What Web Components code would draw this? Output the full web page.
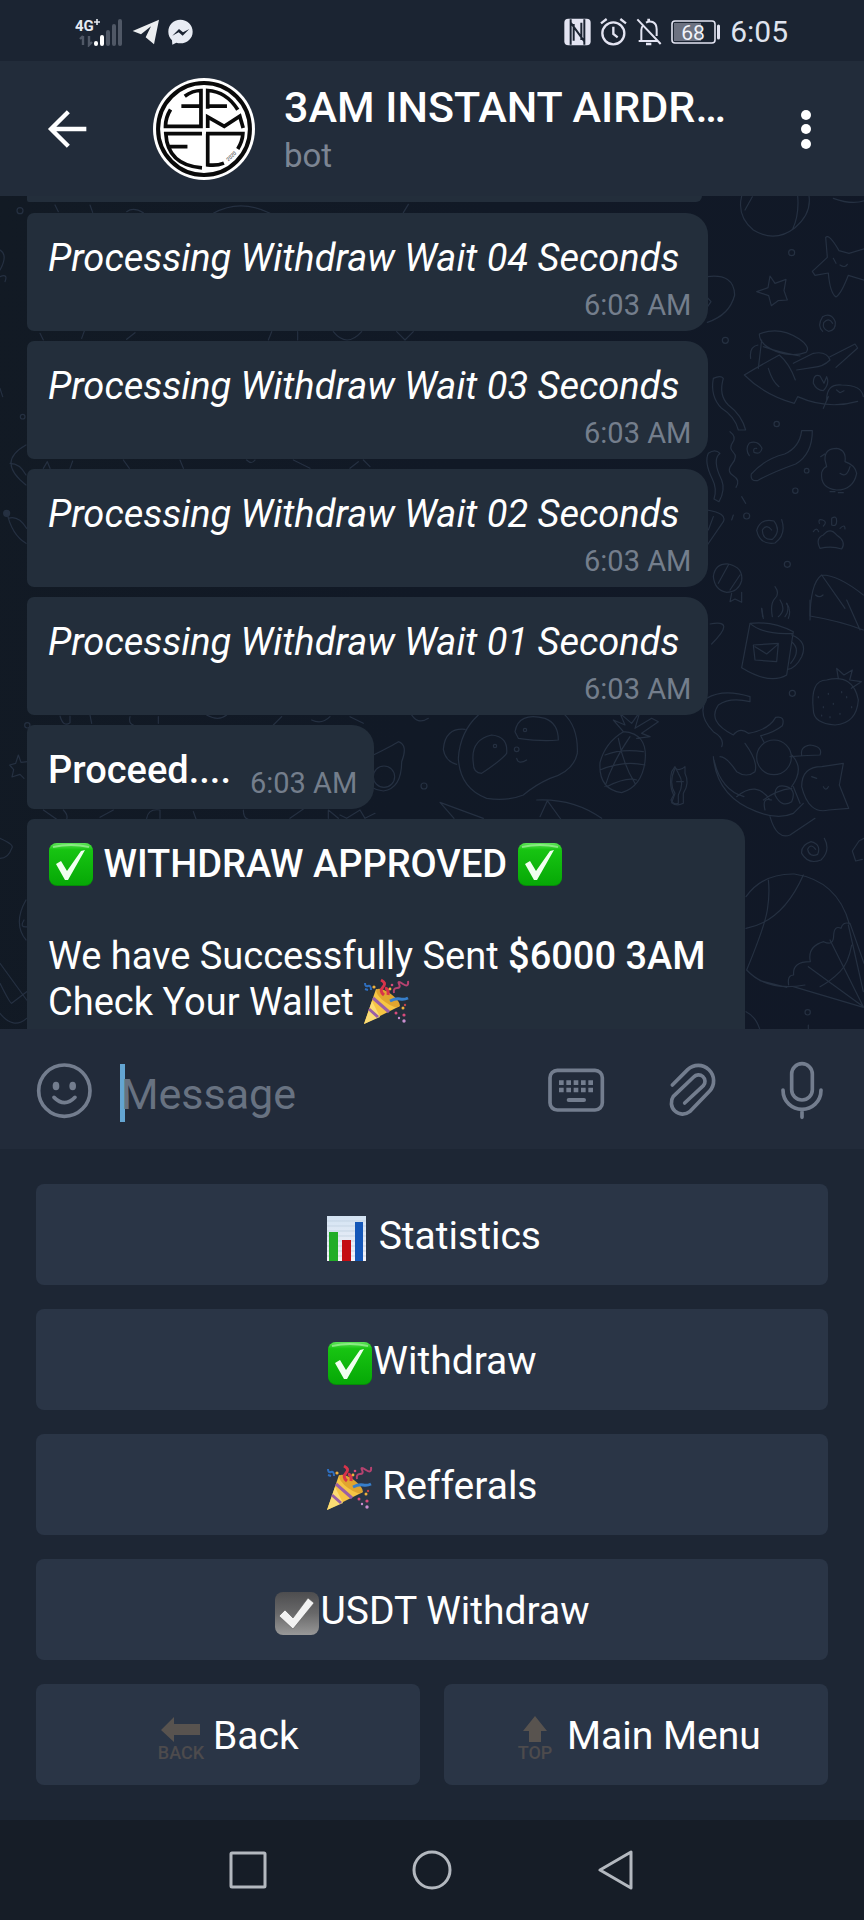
<!DOCTYPE html>
<html lang="en">
<head>
<meta charset="utf-8">
<meta name="viewport" content="width=device-width, initial-scale=1">
<title>3AM Instant Airdrop</title>
<style>
  html, body { margin: 0; background: #161d27; }
  body { font-family: Roboto, "Noto Sans", sans-serif; color: #fff; }
</style>
</head>
<body>
<chat-screen></chat-screen>

<script>
const define = (name, html) => {
  const tpl = document.createElement('template');
  tpl.innerHTML = html;
  customElements.define(name, class extends HTMLElement {
    constructor() {
      super();
      this.attachShadow({ mode: 'open' }).append(tpl.content.cloneNode(true));
    }
  });
};

/* ---------- emoji ---------- */
const EMOJI = {
  check: `<defs><linearGradient id="g" x1="0" y1="0" x2="0" y2="1"><stop offset="0" stop-color="#5fe35a"/><stop offset=".16" stop-color="#17c412"/><stop offset="1" stop-color="#06a806"/></linearGradient></defs>
    <rect x="1" y="1" width="44" height="43" rx="8" fill="#078a0a"/><rect x="1" y="1" width="44" height="42" rx="8" fill="url(#g)"/>
    <path d="M5 5Q23 1 41 5" stroke="#a6f2a0" stroke-width="2" fill="none" opacity=".7"/>
    <path d="M8 22l5-3 6 10L33 9l4-1-17 30h-3z" fill="#f1fff0"/>`,
  gray: `<defs><linearGradient id="g" x1="0" y1="0" x2="0" y2="1"><stop offset="0" stop-color="#4d4d4f"/><stop offset=".5" stop-color="#69696a"/><stop offset="1" stop-color="#989898"/></linearGradient></defs>
    <rect x="1" y="1" width="44" height="43" rx="8" fill="url(#g)"/>
    <path d="M5 25l6-6 8 8L34 7l6 5-21 26z" fill="#f2f2f2" stroke="#555" stroke-width=".6"/>`,
  chart: `<defs><linearGradient id="g" x1="0" y1="0" x2="0" y2="1"><stop offset="0" stop-color="#d3e3f3"/><stop offset="1" stop-color="#f6f3f8"/></linearGradient></defs>
    <rect x="4" y="0" width="39" height="45" fill="url(#g)"/>
    <path d="M4 5h39M4 10h39M4 15h39M4 20h39M4 25h39M4 30h39M4 35h39M4 40h39" stroke="#bccddd" stroke-width=".7"/>
    <rect x="6" y="16" width="9" height="29" fill="#22ad27"/><rect x="19" y="24" width="9" height="21" fill="#c40d13"/><rect x="32" y="6" width="8" height="39" fill="#1457b8"/>`,
  party: `<path d="M1 44L13 9Q29 14 37 26z" fill="#f6c544"/>
    <path d="M1 44L9 21l8 16z" fill="#fbdc74"/>
    <path d="M10 18l16 14M6 29l9 8" stroke="#9a5fa5" stroke-width="3" fill="none"/>
    <ellipse cx="25" cy="18" rx="14" ry="5" transform="rotate(36 25 18)" fill="#e0a52f"/>
    <path d="M21 15q-5-4-1-8t-2-7M25 15q1-6-3-7" stroke="#d8334a" stroke-width="3" fill="none"/>
    <path d="M27 21q6-3 10-2t8-1" stroke="#377fcb" stroke-width="3" fill="none"/>
    <path d="M2 3q0 4 3 3t3 4M2 9l3 1" stroke="#2e6fc0" stroke-width="2" fill="none"/>
    <path d="M31 13q-1-5 3-5t2-4 4 0 5-3" stroke="#b5426f" stroke-width="2" fill="none"/>
    <g fill="#d94a7b"><circle cx="33" cy="33" r="1.5"/><circle cx="41" cy="35" r="1.6"/><circle cx="29" cy="5" r="1.3"/></g>
    <g fill="#efb13c"><circle cx="11" cy="7" r="1.6"/><circle cx="40" cy="28" r="1.5"/><circle cx="27" cy="9" r="1.4"/></g>
    <g fill="#c98fd0"><circle cx="41" cy="41" r="1.7"/><circle cx="36" cy="38" r="1.2"/></g><circle cx="42" cy="25" r="1.2" fill="#c3424c"/>`,
  back: `<path d="M4 14L17 1v7h26v11H17v7z" fill="#58534f"/><text x="24" y="43" text-anchor="middle" font-size="18" font-weight="500" fill="#4d4b4d">BACK</text>`,
  top: `<path d="M24 0l12 15h-6v11H18V15h-6z" fill="#58534f"/><text x="24" y="43" text-anchor="middle" font-size="18" font-weight="500" fill="#4d4b4d">TOP</text>`
};
customElements.define('ui-emoji', class extends HTMLElement {
  constructor() {
    super();
    this.attachShadow({ mode: 'open' }).innerHTML = `<style>
      :host { display: inline-block; width: 46px; height: 45px; vertical-align: var(--emoji-drop, -10px); }
      svg { display: block; overflow: visible; }
    </style><svg width="46" height="45" viewBox="0 0 46 45" aria-hidden="true">${EMOJI[this.getAttribute('name')]}</svg>`;
  }
});

/* ---------- status bar ---------- */
define('status-bar', `<style>
  :host { display: flex; align-items: center; justify-content: space-between; height: 61px; padding: 3px 76px 0 75px; box-sizing: border-box; background: #1b2432; color: #dfe3ee; }
  div { display: flex; align-items: center; }
  .left { gap: 9px; } .right { gap: 9px; }
  svg { display: block; }
  .clock { font-size: 30px; line-height: 36px; }
</style>
<div class="left">
  <svg width="48" height="30" viewBox="0 0 48 30"><text x="0" y="14" font-size="15" font-weight="700" fill="#e6eaf2">4G</text><path d="M19 5h6M22 2v6" stroke="#e6eaf2" stroke-width="1.6"/>
    <g stroke-width="4" stroke-linecap="round"><path d="M21 26v1M27 20v7" stroke="#fff"/><path d="M33 15v12M39 9v18M45 4v23" stroke="#505866"/></g>
    <path d="M8 19v9M5 22l3-3M14 19v9l3-3" stroke="#505866" stroke-width="2.4" fill="none"/></svg>
  <svg width="27" height="26" viewBox="0 0 81 78"><path d="M2 36L81 2 66 76 41 55 57 22 27 46z" fill="#eceef0"/></svg>
  <svg width="25" height="26" viewBox="0 0 75 78"><path d="M37 2C16 2 1 17 1 38c0 10 4 19 11 26l1 13 12-6c4 1 8 2 12 2 21 0 37-15 37-35S58 2 37 2z" fill="#e8ecf4"/><path d="M13 50l20-20 12 10 19-10-20 20-12-10z" fill="#1b2432"/></svg>
</div>
<div class="right">
  <svg width="27" height="28" viewBox="0 0 81 84"><rect x="1" y="2" width="79" height="80" rx="12" fill="#e3e4f2"/><path d="M20 4v76M61 4v76M20 14l41 56M29 18v50M52 14v52" stroke="#1b2432" stroke-width="6" fill="none"/></svg>
  <svg width="27" height="28" viewBox="0 0 81 84" fill="none" stroke="#e3e4f2" stroke-width="7"><circle cx="40" cy="46" r="33"/><path d="M40 26v22l13 10M3 16L20 3M78 16L61 3"/></svg>
  <svg width="26" height="28" viewBox="0 0 78 84" fill="none" stroke="#e3e4f2" stroke-width="6"><path d="M4 4l70 74M16 68V36q0-8 5-13M30 14q10-6 20-2 12 5 12 22v20M8 69h56"/><path d="M38 2v8M30 78h16" stroke-width="8"/></svg>
  <svg width="50" height="26" viewBox="0 0 50 26"><rect x="1" y="2" width="43" height="22" rx="3" fill="none" stroke="#e3e4f2" stroke-width="1.6"/><rect x="3" y="4" width="27" height="18" fill="#6c7180"/><path d="M47.5 7v12" stroke="#e3e4f2" stroke-width="3" stroke-linecap="round"/><text x="22" y="21" text-anchor="middle" font-size="21" fill="#f3f4fa">68</text></svg>
  <span class="clock">6:05</span>
</div>`);

/* ---------- chat header ---------- */
define('chat-header', `<style>
  :host { display: flex; align-items: center; height: 135px; padding: 0 33px 0 45px; box-sizing: border-box; background: #222c3a; }
  button { all: unset; display: block; cursor: pointer; }
  svg { display: block; }
  .avatar { margin: 0 29px 0 63px; flex: none; }
  .who { flex: 1; min-width: 0; padding-top: 4px; }
  h1 { margin: 0; font-size: 43px; line-height: 50px; font-weight: 500; white-space: nowrap; }
  p { margin: 0; font-size: 33px; line-height: 48px; color: #7c8593; }
</style>
<button aria-label="Go back"><svg width="45" height="40" viewBox="0 0 135 120" fill="none" stroke="#fff" stroke-width="13"><path d="M18 60h106M70 8L18 60l52 52"/></svg></button>
<svg class="avatar" width="102" height="102" viewBox="461 237 302 302" role="img" aria-label="3AM logo">
  <circle cx="612" cy="388" r="151" fill="#fff"/>
  <circle cx="612" cy="388" r="136" fill="none" stroke="#0a0a0a" stroke-width="12"/>
  <g fill="none" stroke="#0a0a0a" stroke-width="11">
    <path d="M555 291Q578 274 603 274V380H498Q498 354 513 330M545 320h58"/>
    <path d="M623 328V274Q678 277 712 331M623 320h57M623 385V352l49 28 46-30 10 35"/>
    <path d="M606 402H499Q504 495 606 503M506 440h57"/>
    <path d="M623 402V494Q648 498 671 489M618 402H727Q726 424 712 447"/>
  </g>
  <text x="684" y="484" font-size="15" transform="rotate(-43 684 484)" fill="#222">2020</text>
</svg>
<div class="who"><h1>3AM INSTANT AIRDR…</h1><p>bot</p></div>
<button aria-label="More options"><svg width="50" height="60" viewBox="0 0 50 60" fill="#fff"><circle cx="25" cy="16" r="5"/><circle cx="25" cy="30" r="5"/><circle cx="25" cy="45" r="5"/></svg></button>`);

/* ---------- wallpaper ---------- */
define('doodle-wallpaper', `<style>
  :host { display: block; overflow: hidden; background: linear-gradient(100deg, #121a24 0%, #111926 50%, #111827 100%); }
  svg { display: block; }
</style>
<svg width="864" height="833" viewBox="0 196 864 833" fill="none" stroke="#253041" stroke-width="3.600" stroke-linecap="round" stroke-linejoin="round" aria-hidden="true">
  <g transform="translate(650 190) scale(.33333)">
    <path d="M275 18q-15 60 35 102 65 40 125-7 50-42 42-95M443 18q5 55-15 100M285 60l22-40M550 25q60 22 100 5"/>
    <path d="M527 142q10-12 40 40l30 8 50-15M527 142l5 60-45 42 8 12 40-7q5 60 23 72 15-8 37-65l50 15M550 205l8 15M570 225q15 10 22-2"/>
    <path d="M360 258l15 22 33-12-6 34 10 28-28 2-20 15-8-30-36-12 34-12z"/>
    <path d="M172 260q80-10 82 55-15 60-82 82M165 315l18 20-15 22"/>
    <path d="M548 400q-12-20-27-2-5 20 15 26 22-3 20-28-12-30-38-16-18 28 0 44"/>
    <path d="M328 432q60-25 120 15 35 25 20 40-40 15-90-3-50-20-50-52zM340 470q50 18 110 28M325 535l10-85M302 505q-5-35 22-40"/>
    <path d="M283 555q50-30 105-60 30 25 48 75M283 555q60 60 150 85l10-20q90 40 180 14M355 535q12 40 32 55"/>
    <path d="M430 520l60-30q40-8 50 20-20 20-50 22l-50 8M540 500l75-38 8 12-65 58"/>
    <path d="M490 580q0-30 20-22l12 22 8-20q10 20-10 42-20 0-30-22M530 630q0-50 45-45 60 0 65 35M520 655l15-35M560 600l10 8 12-6"/>
    <path d="M190 565q22-10 30 0-15 50 15 80 40 30 52 75h-22q-10-40-50-65-35-35-25-90"/>
    <path d="M455 722h32q0 70-50 100-70 25-115 50-22 2-18-20 40-45 100-60 45-20 51-70"/>
    <path d="M320 775q-12-2-8 12 20 8 24-12-12-25-38-16-14 18 0 38"/>
    <path d="M240 725q20 15 8 32t2 30-4 35 4 35 8 35"/>
    <path d="M175 790q20-15 35 0-25 20 5 80 12 30-8 65l-15-8q10-30-5-60-25-50-12-77"/>
    <path d="M525 810q-2-35 35-35 30 5 25 40 30 10 35 35-10 50-60 50-50-5-45-52 5-15 15-18zM570 850q20 15 30-20M540 905h15M565 908h15M512 800l12-8"/>
    <path d="M365 1020q-15-20-28 0 0 30 30 28 28-25 5-55-40-10-52 28 10 45 55 38 35-25 20-70"/>
    <path d="M510 1075q-15-30 10-40 20-25 40 0 30 20 15 42-30-10-65-2M490 1025q10-15 16 0M508 1000q-5-15 10-10t2 18M545 985q15-10 15 8t-15 12zM570 1015q15-15 15 2"/>
    <path d="M190 1160q5-40 45-38 45 10 40 50-10 35-45 35-35-5-40-47zM205 1180l30-55M240 1200l30-45M245 1210l-5 25 15-8 20 10v-30"/>
    <path d="M480 1290q0-110 35-135 50 0 125 60M515 1155l70 100M497 1215q10 10 22 0"/>
    <path d="M375 1190q15 20 0 35t-8 55M335 1255l5 30M410 1240q10 20-5 40M172 960q60 10 48 35l-48 70M175 1020l15-40M245 990l5-15M275 920l12 20"/>
    <g><circle cx="425" cy="188" r="9"/><circle cx="226" cy="451" r="9"/><circle cx="380" cy="702" r="8"/><circle cx="470" cy="842" r="7"/><circle cx="436" cy="902" r="8"/><circle cx="290" cy="978" r="9"/><circle cx="412" cy="1123" r="9"/></g>
  </g>
  <g transform="translate(650 600) scale(.33333)">
    <path d="M300 70q65-8 130 25l-20 130q-50 30-135-22zM300 70q40 35 128 30M425 105q50 20 30 65-18 35-42 38M425 125q30 25-3 65M310 135l75-5-5 55-65-5zM315 140l35 22 33-28M385 50q25-20 5-50M335 25l3 25M410 10q15 20 5 45"/>
    <path d="M480 0v48q90 15 160 42M590 0l40 90M180 72q80-15 5 60"/>
    <path d="M490 330q-10-90 40-90 80-20 95 60-5 70-70 75-65-5-65-45M565 235l-5-30 22 20 25-15-8 30 35 5-30 20M505 290v3M520 320v3M535 280v3M550 310v3M570 340v3M590 290v3M605 320v3M540 350v3M515 345v3M575 275v3"/>
    <path d="M215 440q10-25-25-45-50-50-20-100 50-30 130-5v15q-60-15-95 10-35 50 45 90 20-25 45-5 60-10 82-48 30-5 20 25-25 20-65 30l10 20"/>
    <path d="M190 470q10 120 130 165 65 25 110 5l30-30M210 470q20 0 50 45 30 20 55 0 10-30-30-85M192 480q20 90 90 110"/>
    <circle cx="372" cy="472" r="52"/>
    <path d="M420 470q60-5 90-5 10-25-30-30-30 5-25 30M455 560q0-60 60-60l65-10-12 65 28 70-60 5q-60 15-81-70zM425 465q40 40 0 95M485 530l15 5M520 560q8 15 15 0M340 600q40-30 85-35M260 590q60-50 100 10M375 585q0-35 35-25 30 10 15 45-30 20-50-20M345 630q-10-40 20-30M360 650q20 70 60 55l75-50M430 560l20 50"/>
    <path d="M75 505q15 10 30-5v20q15 30-5 60v30q-20 10-35-2l10-28q-20-30 0-75M80 545h20"/>
    <path d="M497 748q-15-20-24 0 5 25 30 15 12-30-20-38-30 10-28 35 20 35 58 20 30-30 10-65M642 715l-15 8-20 30 10 30 20-5"/>
    <path d="M288 890q50-70 145-68 130 20 165 150M355 840q5 40-3 90t-62 180q60 65 175 45M288 985q110-20 172-160M598 970q-20-5-25 15-20-10-22 20 0 35-30 20-50 15-40 60-55 0-50 40-20 0-15 30M540 1020l100 200M475 1100l165 120M430 1160l210 62M410 1162l-80-20M600 970l42 120M595 975l45 200M570 1115q25-25 35-80M510 1160q30-15 60-45M288 1235q30 15 42 55M475 1275v15"/>
    <circle cx="427" cy="280" r="9"/><circle cx="473" cy="1237" r="8"/>
  </g>
  <g transform="translate(340 700) scale(.33333)">
    <path d="M415 45q-55 50-60 130 5 90 85 120 60 10 110-10 35-30 80-50 70-20 82-75Q715 80 670 40M375 88q-60-5-65 60 5 35 40 45M400 190q-10-70 55-85 50 5 45 55-15 20-75 60-25 0-25-30M525 95q10-60 90-40 40 15 40 65-50 5-120-5zM530 175q5 20 30 5"/>
    <circle cx="465" cy="138" r="5"/><circle cx="555" cy="90" r="5"/><circle cx="530" cy="148" r="7"/><circle cx="252" cy="258" r="9"/>
    <path d="M100 165q60-30 75-40 30 10 10 60 0 80-55 88-20-2-32-10M215 45q20 30 50 10"/><circle cx="132" cy="230" r="32"/>
    <path d="M850 95q75 5 65 90-10 75-70 93-70-10-65-90 15-60 70-93M795 165q50-20 115-10M780 210q70-30 135-15M800 260q60-30 90-20M835 115q15 80 50 135M870 110q-55 80-75 150M850 95l-30-35 35 15-15-35 35 30 25-35-15 50 50-30 20 10-50 35 25 10-40 5"/>
    <path d="M995 215l10-15 10 20q20 30 0 65v25q-15 5-22-10l8-15q-15-30-6-70M430 355l-130-48 42 48M590 300q110-5 195 55M600 350l22-48 40 55M0 345l20 10 40-25 15 25 30-15"/>
  </g>
  <g transform="translate(0 700) scale(.33333)">
    <path d="M55 165l8 22 20-2M55 165l-8 25-18 5 12 14-5 22 24-8 12 12M0 415q45 20 35 30-10 30-35 30M78 600q-40 70 0 120M72 660q-15 25 12 20M0 790l80 110M0 850q30 60 35 60l45-35M0 940q40 50 80 15"/><circle cx="82" cy="76" r="8"/>
    <path d="M180 48q10 35 30 20v-20M270 45l5 25M390 50q-5 20 10 25M475 50v20M620 45q35 20 60 0M820 75l25-25M935 60q30 15 55-10M1050 50l40 20M130 330l40 28M190 330q15 15 10 28M340 330l-40 22M440 355q5-30 40-25v25M580 335l8 22M730 330q0 25 15 28M870 355l40-28M985 355v-25l30 25"/>
  </g>
  <g transform="translate(0 190) scale(.33333)">
    <path d="M0 180q25 15 0 60M0 260q25-10 15 15M0 595l8 25M78 765q-90 50 0 120M30 820q30 0 48 35M20 965q15 70 58 95M25 985q30-10 55 30"/><circle cx="60" cy="62" r="9"/><circle cx="68" cy="680" r="7"/><circle cx="20" cy="970" r="9" fill="#253041"/>
    <path d="M165 45l10 20M270 45l8 22M380 65q20-15 50 3M640 70q80-45 170 0M1210 68l15-25M120 430l10 20M245 445l8-22M380 448l25-20M805 450l10-25M893 425v25M1000 425q40 50 85 0M1190 425l25 25 25-25M130 835l12-20 8 20M210 835l8-22M370 810l18 25M540 810l10 25M740 810q15 15 25 0M880 810l50 25M1050 835l25-20M1090 810l20 20"/>
  </g>
</svg>`);

/* ---------- message bubble ---------- */
define('chat-bubble', `<style>
  :host { display: flex; flex-direction: column; align-self: flex-start; box-sizing: border-box; max-width: 92%; padding: 22px 17px 9px 21px; background: #232e3b; border-radius: 7px 22px 22px 7px; font-size: 38px; line-height: 46px; }
  :host([inline]) { flex-direction: row; align-items: flex-end; gap: 19px; }
  :host([stub]) { width: 675px; height: 6px; margin-bottom: 1px; padding: 0; border-radius: 0 0 22px 7px; }
  :host([open]) { flex: 1 0 0; padding-right: 39px; padding-bottom: 0; border-radius: 7px 22px 0 0; }
  .body { display: block; padding-right: 12px; }
  :host([inline]) .body { padding: 0 0 7px; }
  :host([open]) .body { padding-right: 0; }
  ::slotted([slot=time]) { align-self: flex-end; margin-top: 8px; font-size: 29px; line-height: 33px; color: #747e8c; white-space: nowrap; }
</style>
<div class="body"><slot></slot></div><slot name="time"></slot>`);

define('message-list', `<style>
  :host { display: grid; position: relative; overflow: hidden; min-height: 0; }
  doodle-wallpaper { position: absolute; inset: 0; }
  .list { position: relative; display: flex; flex-direction: column; gap: 10px; padding-left: 27px; }
  p { margin: 0; }
  b { font-weight: 500; }
</style>
<doodle-wallpaper></doodle-wallpaper>
<div class="list">
  <chat-bubble stub></chat-bubble>
  <chat-bubble><i>Processing Withdraw Wait 04 Seconds</i><time slot="time">6:03 AM</time></chat-bubble>
  <chat-bubble><i>Processing Withdraw Wait 03 Seconds</i><time slot="time">6:03 AM</time></chat-bubble>
  <chat-bubble><i>Processing Withdraw Wait 02 Seconds</i><time slot="time">6:03 AM</time></chat-bubble>
  <chat-bubble><i>Processing Withdraw Wait 01 Seconds</i><time slot="time">6:03 AM</time></chat-bubble>
  <chat-bubble inline><b>Proceed....</b><time slot="time">6:03 AM</time></chat-bubble>
  <chat-bubble open>
    <p><ui-emoji name="check"></ui-emoji><b> WITHDRAW APPROVED </b><ui-emoji name="check"></ui-emoji></p>
    <p><br></p>
    <p>We have Successfully Sent <b>$6000 3AM</b></p>
    <p>Check Your Wallet <ui-emoji name="party"></ui-emoji></p>
  </chat-bubble>
</div>`);

/* ---------- message input ---------- */
define('message-bar', `<style>
  :host { display: flex; align-items: center; height: 120px; padding: 2px 39px 0 35px; box-sizing: border-box; background: #222b3a; }
  button { all: unset; display: block; flex: none; cursor: pointer; }
  svg { display: block; fill: none; stroke: #737d8e; stroke-width: 11; stroke-linecap: round; stroke-linejoin: round; }
  .caret { flex: none; width: 5px; height: 58px; margin: 5px 0 0 26px; background: #64a5d2; }
  input { flex: 1; min-width: 0; height: 58px; margin: 7px 0 0 -4px; padding: 0; border: 0; outline: 0; background: none; color: #fff; font: 43px/50px Roboto, sans-serif; }
  input::placeholder { color: #687281; opacity: 1; }
  .tools { display: flex; align-items: center; gap: 62px; }
</style>
<button aria-label="Emoji"><svg width="59" height="59" viewBox="105 1083 177 177"><circle cx="193" cy="1172" r="77"/><path d="M162 1192q32 32 63 0"/><g fill="#737d8e" stroke="none"><ellipse cx="168" cy="1158" rx="10" ry="13"/><ellipse cx="218" cy="1158" rx="10" ry="13"/></g></svg></button>
<span class="caret"></span>
<input type="text" placeholder="Message" aria-label="Message">
<div class="tools">
  <button aria-label="Bot keyboard"><svg width="58" height="58" viewBox="345 726 174 174"><rect x="354" y="754" width="157" height="119" rx="22"/><path d="M381 791h102M381 813h102" stroke-dasharray="14 8" stroke-linecap="butt" stroke-width="14"/><path d="M410 843h46" stroke-width="12"/></svg></button>
  <button aria-label="Attach file"><svg width="50" height="58" viewBox="702 726 150 174"><path d="M718 798l46-46A46 46 0 0 1 830 816L770 878A34 34 0 0 1 721 832L782 774A19 19 0 0 1 811 800L755 852"/></svg></button>
  <button aria-label="Voice message"><svg width="46" height="60" viewBox="1040 722 138 180"><rect x="1078" y="733" width="62" height="109" rx="31"/><path d="M1052 812C1052 848 1080 870 1109 870S1166 848 1166 812M1109 870v24"/></svg></button>
</div>`);

/* ---------- bot keyboard ---------- */
define('key-button', `<style>
  :host { display: block; --emoji-drop: -12px; }
  button { display: block; box-sizing: border-box; width: 100%; height: 101px; margin: 0; padding: 4px 0 0; border: 0; border-radius: 8px; background: #2a3546; color: #fff; font: 39px/46px Roboto, sans-serif; text-align: center; cursor: pointer; }
</style>
<button type="button"><slot></slot></button>`);

define('bot-keyboard', `<style>
  :host { display: grid; grid-template-columns: 1fr 1fr; gap: 24px; padding: 35px 36px; background: #1d2634; }
  .wide { grid-column: span 2; }
</style>
<key-button class="wide"><ui-emoji name="chart"></ui-emoji> Statistics</key-button>
<key-button class="wide"><ui-emoji name="check"></ui-emoji>Withdraw</key-button>
<key-button class="wide"><ui-emoji name="party"></ui-emoji> Refferals</key-button>
<key-button class="wide"><ui-emoji name="gray"></ui-emoji>USDT Withdraw</key-button>
<key-button><ui-emoji name="back"></ui-emoji> Back</key-button>
<key-button><ui-emoji name="top"></ui-emoji> Main Menu</key-button>`);

/* ---------- system navigation ---------- */
define('nav-bar', `<style>
  :host { display: flex; align-items: center; justify-content: center; gap: 144px; height: 100px; background: #161d27; }
  button { all: unset; cursor: pointer; }
  svg { display: block; fill: none; stroke: #b3b8bf; stroke-width: 3; stroke-linejoin: round; }
</style>
<button aria-label="Recent apps"><svg width="40" height="40" viewBox="0 0 40 40"><rect x="3" y="3" width="34" height="34" rx="1"/></svg></button>
<button aria-label="Home"><svg width="40" height="40" viewBox="0 0 40 40"><circle cx="20" cy="20" r="18"/></svg></button>
<button aria-label="Back"><svg width="40" height="40" viewBox="0 0 40 40"><path d="M35 2v36L4 20z"/></svg></button>`);

/* ---------- screen ---------- */
define('chat-screen', `<style>
  :host { display: grid; grid-template-columns: minmax(0, 1fr); grid-template-rows: auto auto 1fr auto auto auto; min-height: 100vh; }
</style>
<status-bar></status-bar>
<chat-header></chat-header>
<message-list></message-list>
<message-bar></message-bar>
<bot-keyboard></bot-keyboard>
<nav-bar></nav-bar>`);
</script>
</body>
</html>
